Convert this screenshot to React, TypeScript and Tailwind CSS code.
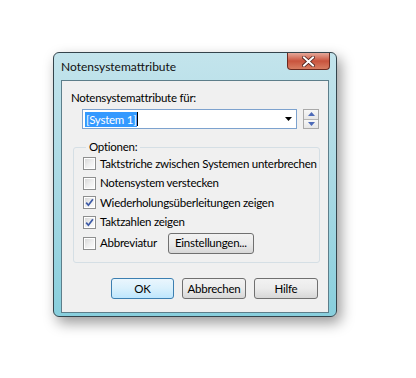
import React from 'react';

const font = { fontFamily: 'Lato, "Noto Sans", "DejaVu Sans", sans-serif' };

const Check: React.FC<{ checked?: boolean }> = ({ checked }) => (
  <span className="w-[13px] h-[13px] shrink-0 border border-[#8e8f8f] bg-white p-[1px] flex">
    <span className="flex-1 flex items-center justify-center bg-gradient-to-br from-[#d9d9d9] via-[#eeeeee] to-[#fbfbfb]">
      {checked && (
        <svg width="9" height="9" viewBox="0 0 9 9">
          <path d="M1.2 4.6 L3.4 7.2 L7.9 1.2" fill="none" stroke="#3d5aa6" strokeWidth="1.7" />
        </svg>
      )}
    </span>
  </span>
);

const Option: React.FC<{ label: string; checked?: boolean }> = ({ label, checked }) => (
  <div className="h-[19.5px] flex items-center gap-[4px] whitespace-nowrap">
    <Check checked={checked} />
    <span>{label}</span>
  </div>
);

const Btn: React.FC<{ children: React.ReactNode; primary?: boolean; className?: string }> = ({ children, primary, className }) => (
  <button
    className={
      'h-[21px] rounded-[3px] border text-[11.5px] tracking-[-0.25px] leading-none flex items-center justify-center whitespace-nowrap ' +
      (primary
        ? 'border-[#3c7fb1] bg-gradient-to-b from-[#eaf6fd] via-[#d9f0fc] to-[#bee6fd] '
        : 'border-[#707070] bg-gradient-to-b from-[#f2f2f2] via-[#ebebeb] to-[#d7d7d7] ') +
      (className ?? '')
    }
  >
    {children}
  </button>
);

export default function App() {
  return (
    <div className="w-[416px] h-[378px] bg-white pt-[52px] pl-[53px] text-black" style={font}>
      <div className="w-[284px] h-[265px] rounded-[6px] border border-[#34444c] bg-gradient-to-b from-[#c3e4ec] via-[#a9d9e4] to-[#88cfdd] flex flex-col shadow-[4px_6px_14px_rgba(0,0,0,0.4)]">
        {/* title bar */}
        <div className="h-[27px] flex items-start justify-between pl-[7px] pr-[6px]">
          <span className="mt-[6px] text-[12px] leading-[16px] text-[#111]">Notensystemattribute</span>
          <div className="w-[43px] h-[17px] rounded-b-[4px] border border-t-0 border-[#6b2a20] bg-gradient-to-b from-[#e4a799] via-[#c9533d] to-[#d87d62] flex items-center justify-center">
            <svg width="13" height="11" viewBox="0 0 13 11">
              <path d="M2 1.5 L11 9.5 M11 1.5 L2 9.5" stroke="#4a1f1a" strokeWidth="3.6" strokeLinecap="square" />
              <path d="M2 1.5 L11 9.5 M11 1.5 L2 9.5" stroke="#ffffff" strokeWidth="2" strokeLinecap="square" />
            </svg>
          </div>
        </div>

        {/* client area */}
        <div className="flex-1 mx-[7px] mb-[3px] border border-[#5d7e8a] bg-[#f0f0f0] text-[11.5px] tracking-[-0.25px] leading-[16px] flex flex-col">
          <div className="pt-[9px] pl-[9px]">Notensystemattribute für:</div>

          <div className="mt-[3px] ml-[20px] flex gap-[6px]">
            <div className="w-[215px] h-[20px] border border-[#7da2ce] bg-white flex items-center pl-[2px] pr-[4px]">
              <span className="bg-[#3399ff] text-white px-[1px] leading-[15px]">[System 1]</span>
              <span className="w-[1px] h-[14px] bg-black" />
              <span className="flex-1" />
              <svg width="7" height="4" viewBox="0 0 7 4">
                <path d="M0 0 H7 L3.5 4 Z" fill="#000" />
              </svg>
            </div>
            <div className="w-[16px] h-[20px] border border-[#a9a9a9] flex flex-col bg-[#f4f4f4]">
              <div className="flex-1 flex items-center justify-center border-b border-[#b5b5b5] bg-gradient-to-b from-[#f7f7f7] to-[#e6e6e6]">
                <svg width="7" height="4" viewBox="0 0 7 4">
                  <path d="M0 4 H7 L3.5 0 Z" fill="#4d6ab8" />
                </svg>
              </div>
              <div className="flex-1 flex items-center justify-center bg-gradient-to-b from-[#f7f7f7] to-[#e6e6e6]">
                <svg width="7" height="4" viewBox="0 0 7 4">
                  <path d="M0 0 H7 L3.5 4 Z" fill="#4d6ab8" />
                </svg>
              </div>
            </div>
          </div>

          <fieldset className="mt-[11px] ml-[11px] w-[246px] h-[123px] border border-[#d5dfe5] rounded-[3px] pl-[9px] pr-[2px]">
            <legend className="ml-[3px] px-[3px] leading-[14px]">Optionen:</legend>
            <Option label="Taktstriche zwischen Systemen unterbrechen" />
            <Option label="Notensystem verstecken" />
            <Option label="Wiederholungsüberleitungen zeigen" checked />
            <Option label="Taktzahlen zeigen" checked />
            <div className="h-[20px] flex items-center gap-[4px] mt-[1px]">
              <Check />
              <span>Abbreviatur</span>
              <Btn className="ml-[7px] w-[86px] h-[19px]">Einstellungen...</Btn>
            </div>
          </fieldset>

          <div className="mt-[15px] pr-[10px] flex justify-end gap-[8px]">
            <Btn primary className="w-[63px]">OK</Btn>
            <Btn className="w-[64px]">Abbrechen</Btn>
            <Btn className="w-[64px]">Hilfe</Btn>
          </div>
        </div>
      </div>
    </div>
  );
}
